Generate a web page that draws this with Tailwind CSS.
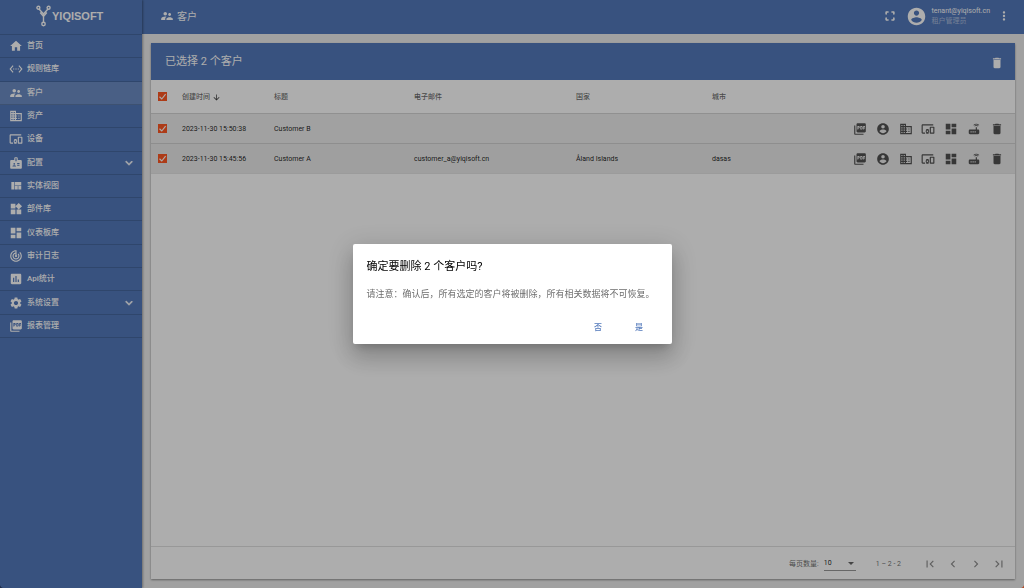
<!DOCTYPE html>
<html lang="zh-CN">
<head>
    <meta charset="UTF-8">
    <meta name="viewport" content="width=device-width, initial-scale=1.0">
    <title>YIQISOFT - 客户</title>
    <script src="https://cdn.jsdelivr.net/npm/@tailwindcss/browser@4"></script>
</head>
<body class="h-screen overflow-hidden bg-[#eeeeee] font-[Roboto,'Noto_Sans_CJK_SC',sans-serif]">

<!-- icon sprite -->
<svg class="hidden">
    <symbol id="home" viewBox="0 0 24 24"><path d="M10 20v-6h4v6h5v-8h3L12 3 2 12h3v8z"/></symbol>
    <symbol id="rules" viewBox="0 0 24 24"><path d="M7.77 6.76L6.23 5.48.82 12l5.41 6.52 1.54-1.28L3.42 12l4.35-5.24zM7 13h2v-2H7v2zm10-2h-2v2h2v-2zm-6 2h2v-2h-2v2zm6.77-7.52l-1.54 1.28L20.58 12l-4.35 5.24 1.54 1.28L23.18 12l-5.41-6.52z"/></symbol>
    <symbol id="customers" viewBox="0 0 24 24"><path d="M16.5 12c1.38 0 2.49-1.12 2.49-2.5S17.88 7 16.5 7C15.12 7 14 8.12 14 9.5s1.12 2.5 2.5 2.5zM9 11c1.66 0 2.99-1.34 2.99-3S10.66 5 9 5C7.34 5 6 6.34 6 8s1.34 3 3 3zm7.5 3c-1.83 0-5.5.92-5.5 2.75V19h11v-2.25c0-1.83-3.67-2.75-5.5-2.75zM9 13c-2.33 0-7 1.17-7 3.5V19h7v-2.25c0-.85.33-2.34 2.37-3.47C10.5 13.1 9.66 13 9 13z"/></symbol>
    <symbol id="assets" viewBox="0 0 24 24"><path d="M12 7V3H2v18h20V7H12zM6 19H4v-2h2v2zm0-4H4v-2h2v2zm0-4H4V9h2v2zm0-4H4V5h2v2zm4 12H8v-2h2v2zm0-4H8v-2h2v2zm0-4H8V9h2v2zm0-4H8V5h2v2zm10 12h-8v-2h2v-2h-2v-2h2v-2h-2V9h8v10zm-2-8h-2v2h2v-2zm0 4h-2v2h2v-2z"/></symbol>
    <symbol id="devices" viewBox="0 0 24 24"><path d="M3 6h18V4H3c-1.1 0-2 .9-2 2v12c0 1.1.9 2 2 2h4v-2H3V6zm10 6H9v1.78c-.61.55-1 1.33-1 2.22s.39 1.67 1 2.22V20h4v-1.78c.61-.55 1-1.34 1-2.22s-.39-1.67-1-2.22V12zm-2 5.5c-.83 0-1.5-.67-1.5-1.5s.67-1.5 1.5-1.5 1.5.67 1.5 1.5-.67 1.5-1.5 1.5zM22 8h-6c-.5 0-1 .5-1 1v10c0 .5.5 1 1 1h6c.5 0 1-.5 1-1V9c0-.5-.5-1-1-1zm-1 10h-4v-8h4v8z"/></symbol>
    <symbol id="profiles" viewBox="0 0 24 24"><path fill-rule="evenodd" d="M20 7h-5V4c0-1.1-.9-2-2-2h-2c-1.1 0-2 .9-2 2v3H4c-1.1 0-2 .9-2 2v11c0 1.1.9 2 2 2h16c1.1 0 2-.9 2-2V9c0-1.1-.9-2-2-2zM9 12c.83 0 1.5.67 1.5 1.5S9.83 15 9 15s-1.5-.67-1.5-1.5S8.17 12 9 12zm3 6H6v-.75c0-1 2-1.5 3-1.5s3 .5 3 1.5V18zm1-9h-2V4h2v5zm5 7.5h-4V15h4v1.5zm0-3h-4V12h4v1.5z"/></symbol>
    <symbol id="views" viewBox="0 0 24 24"><path d="M10 18h5v-6h-5v6zm-6 0h5V5H4v13zm12 0h5v-6h-5v6zM10 5v6h11V5H10z"/></symbol>
    <symbol id="widgets" viewBox="0 0 24 24"><path d="M13 13v8h8v-8h-8zM3 21h8v-8H3v8zM3 3v8h8V3H3zm13.66-1.31L11 7.34 16.66 13l5.66-5.66-5.66-5.65z"/></symbol>
    <symbol id="dashboard" viewBox="0 0 24 24"><path d="M3 13h8V3H3v10zm0 8h8v-6H3v6zm10 0h8V11h-8v10zm0-18v6h8V3h-8z"/></symbol>
    <symbol id="audit" viewBox="0 0 24 24"><path d="M19.07 4.93l-1.41 1.41C19.1 7.79 20 9.79 20 12c0 4.42-3.58 8-8 8s-8-3.58-8-8c0-4.08 3.05-7.44 7-7.93v2.02C8.16 6.57 6 9.03 6 12c0 3.31 2.69 6 6 6s6-2.69 6-6c0-1.66-.67-3.16-1.76-4.24l-1.41 1.41C15.55 9.9 16 10.9 16 12c0 2.21-1.79 4-4 4s-4-1.79-4-4c0-1.86 1.28-3.41 3-3.86v2.14c-.6.35-1 .98-1 1.72 0 1.1.9 2 2 2s2-.9 2-2c0-.74-.4-1.38-1-1.72V2h-1C6.48 2 2 6.48 2 12s4.48 10 10 10 10-4.48 10-10c0-2.76-1.12-5.26-2.93-7.07z"/></symbol>
    <symbol id="usage" viewBox="0 0 24 24"><path d="M19 3H5c-1.1 0-2 .9-2 2v14c0 1.1.9 2 2 2h14c1.1 0 2-.9 2-2V5c0-1.1-.9-2-2-2zM9 17H7v-7h2v7zm4 0h-2V7h2v10zm4 0h-2v-4h2v4z"/></symbol>
    <symbol id="settings" viewBox="0 0 24 24"><path d="M19.14 12.94c.04-.3.06-.61.06-.94 0-.32-.02-.64-.07-.94l2.03-1.58c.18-.14.23-.41.12-.61l-1.92-3.32c-.12-.22-.37-.29-.59-.22l-2.39.96c-.5-.38-1.03-.7-1.62-.94l-.36-2.54c-.04-.24-.24-.41-.48-.41h-3.84c-.24 0-.43.17-.47.41l-.36 2.54c-.59.24-1.13.57-1.62.94l-2.39-.96c-.22-.08-.47 0-.59.22L2.74 8.87c-.12.21-.08.47.12.61l2.03 1.58c-.05.3-.09.63-.09.94s.02.64.07.94l-2.03 1.58c-.18.14-.23.41-.12.61l1.92 3.32c.12.22.37.29.59.22l2.39-.96c.5.38 1.03.7 1.62.94l.36 2.54c.05.24.24.41.48.41h3.84c.24 0 .44-.17.47-.41l.36-2.54c.59-.24 1.13-.56 1.62-.94l2.39.96c.22.08.47 0 .59-.22l1.92-3.32c.12-.22.07-.47-.12-.61l-2.01-1.58zM12 15.6c-1.98 0-3.6-1.62-3.6-3.6s1.62-3.6 3.6-3.6 3.6 1.62 3.6 3.6-1.62 3.6-3.6 3.6z"/></symbol>
    <symbol id="pdf" viewBox="0 0 24 24"><path d="M20 2H8c-1.1 0-2 .9-2 2v12c0 1.1.9 2 2 2h12c1.1 0 2-.9 2-2V4c0-1.1-.9-2-2-2zm-8.5 7.5c0 .83-.67 1.5-1.5 1.5H9v2H7.5V7H10c.83 0 1.5.67 1.5 1.5v1zm5 2c0 .83-.67 1.5-1.5 1.5h-2.5V7H15c.83 0 1.5.67 1.5 1.5v3zm4-3H19v1h1.5V11H19v2h-1.5V7h3v1.5zM9 9.5h1v-1H9v1zM4 6H2v14c0 1.1.9 2 2 2h14v-2H4V6zm10 5.5h1v-3h-1v3z"/></symbol>
    <symbol id="account" viewBox="0 0 24 24"><path d="M12 2C6.48 2 2 6.48 2 12s4.48 10 10 10 10-4.48 10-10S17.52 2 12 2zm0 3c1.66 0 3 1.34 3 3s-1.34 3-3 3-3-1.34-3-3 1.34-3 3-3zm0 14.2c-2.5 0-4.71-1.28-6-3.22.03-1.99 4-3.08 6-3.08 1.99 0 5.97 1.09 6 3.08-1.29 1.94-3.5 3.22-6 3.22z"/></symbol>
    <symbol id="router" viewBox="0 0 24 24"><path d="M20.2 5.9l.8-.8C19.6 3.7 17.8 3 16 3s-3.6.7-5 2.1l.8.8C13 4.8 14.5 4.2 16 4.2s3 .6 4.2 1.7zm-.9.8c-.9-.9-2.1-1.4-3.3-1.4s-2.4.5-3.3 1.4l.8.8c.7-.7 1.6-1 2.5-1 .9 0 1.8.3 2.5 1l.8-.8zM19 13h-2V9h-2v4H5c-1.1 0-2 .9-2 2v4c0 1.1.9 2 2 2h14c1.1 0 2-.9 2-2v-4c0-1.1-.9-2-2-2zM8 18H6v-2h2v2zm3.5 0h-2v-2h2v2zm3.5 0h-2v-2h2v2z"/></symbol>
    <symbol id="delete" viewBox="0 0 24 24"><path d="M6 19c0 1.1.9 2 2 2h8c1.1 0 2-.9 2-2V7H6v12zM19 4h-3.5l-1-1h-5l-1 1H5v2h14V4z"/></symbol>
    <symbol id="fullscreen" viewBox="0 0 24 24"><path d="M5.500 14c-.8 0-1.500.6-1.500 1.300v3.200c0 .8.700 1.500 1.500 1.500h3.200c.7 0 1.300-.6 1.300-1.250S9.400 17.500 8.700 17.500H6.750v-2.200c0-.7-.6-1.300-1.250-1.300zM5.500 10c.65 0 1.250-.6 1.250-1.300V6.500H8.700c.7 0 1.300-.6 1.300-1.250S9.400 4 8.700 4H5.500C4.700 4 4 4.700 4 5.500v3.200c0 .7.700 1.300 1.500 1.300zM17.250 17.500H15.300c-.7 0-1.300.6-1.300 1.250S14.600 20 15.300 20h3.200c.8 0 1.500-.7 1.500-1.500v-3.200c0-.7-.7-1.300-1.400-1.300s-1.350.6-1.350 1.300zM14 5.250c0 .65.600 1.250 1.300 1.250h1.950v2.200c0 .7.650 1.300 1.350 1.300S20 9.400 20 8.700V5.500c0-.8-.7-1.500-1.500-1.500h-3.200c-.7 0-1.300.6-1.300 1.250z"/></symbol>
    <symbol id="more" viewBox="0 0 24 24"><path d="M12 8c1.1 0 2-.9 2-2s-.9-2-2-2-2 .9-2 2 .9 2 2 2zm0 2c-1.1 0-2 .9-2 2s.9 2 2 2 2-.9 2-2-.9-2-2-2zm0 6c-1.1 0-2 .9-2 2s.9 2 2 2 2-.9 2-2-.9-2-2-2z"/></symbol>
    <symbol id="expand" viewBox="0 0 24 24"><path d="M16.59 8.59L12 13.17 7.41 8.59 6 10l6 6 6-6z"/></symbol>
    <symbol id="down" viewBox="0 0 24 24"><path d="M20 12l-1.41-1.41L13 16.17V4h-2v12.17l-5.58-5.59L4 12l8 8 8-8z"/></symbol>
    <symbol id="first" viewBox="0 0 24 24"><path d="M18.41 16.59L13.82 12l4.59-4.59L17 6l-6 6 6 6zM6 6h2v12H6z"/></symbol>
    <symbol id="prev" viewBox="0 0 24 24"><path d="M15.41 7.41L14 6l-6 6 6 6 1.41-1.41L10.83 12z"/></symbol>
    <symbol id="next" viewBox="0 0 24 24"><path d="M10 6L8.59 7.41 13.17 12l-4.58 4.59L10 18l6-6z"/></symbol>
    <symbol id="last" viewBox="0 0 24 24"><path d="M5.59 7.41L10.18 12l-4.59 4.59L7 18l6-6-6-6zM16 6h2v12h-2z"/></symbol>
    <symbol id="check" viewBox="0 0 24 24"><path fill="none" stroke="#fff" stroke-width="3" d="M4 12.7l6 6L20.3 5.6"/></symbol>
</svg>

<div class="flex h-full">
    <!-- sidebar -->
    <aside class="z-10 flex w-[142px] shrink-0 flex-col bg-[#5379bb] text-white shadow-[1px_0_2px_#0005]">
        <div class="flex h-[35px] items-center gap-px border-b border-black/15 pb-[2px] pl-9">
            <svg class="h-[22px] w-[15px]" viewBox="0 0 15 22" fill="none" stroke="currentColor" stroke-width="1.4">
                <path d="M3 4l4.500 5L12 4M7.500 9v8M4.200 7.500l3.300 4 3.300-4"/>
                <circle cx="2.400" cy="2.700" r="1.500"/><circle cx="12.600" cy="2.700" r="1.500"/><circle cx="7.500" cy="19" r="1.700"/>
            </svg>
            <span class="font-['Liberation_Sans',sans-serif] text-[11px] leading-none font-bold">YIQISOFT</span>
        </div>
        <nav class="grid h-[303px] auto-rows-fr text-[8px] font-medium">
            <a href="#" class="flex items-center gap-1 border-b border-black/15 pl-[9px]"><svg class="size-[14px] fill-current"><use href="#home"/></svg>首页</a>
            <a href="#" class="flex items-center gap-1 border-b border-black/15 pl-[9px]"><svg class="size-[14px] fill-current"><use href="#rules"/></svg>规则链库</a>
            <a href="#" class="flex items-center gap-1 border-b border-black/15 bg-white/15 pl-[9px]"><svg class="size-[14px] fill-current"><use href="#customers"/></svg>客户</a>
            <a href="#" class="flex items-center gap-1 border-b border-black/15 pl-[9px]"><svg class="size-[14px] fill-current"><use href="#assets"/></svg>资产</a>
            <a href="#" class="flex items-center gap-1 border-b border-black/15 pl-[9px]"><svg class="size-[14px] fill-current"><use href="#devices"/></svg>设备</a>
            <a href="#" class="flex items-center gap-1 border-b border-black/15 pr-[6px] pl-[9px]"><svg class="size-[14px] fill-current"><use href="#profiles"/></svg>配置<svg class="ml-auto size-[14px] fill-current stroke-current"><use href="#expand"/></svg></a>
            <a href="#" class="flex items-center gap-1 border-b border-black/15 pl-[9px]"><svg class="size-[14px] fill-current"><use href="#views"/></svg>实体视图</a>
            <a href="#" class="flex items-center gap-1 border-b border-black/15 pl-[9px]"><svg class="size-[14px] fill-current"><use href="#widgets"/></svg>部件库</a>
            <a href="#" class="flex items-center gap-1 border-b border-black/15 pl-[9px]"><svg class="size-[14px] fill-current"><use href="#dashboard"/></svg>仪表板库</a>
            <a href="#" class="flex items-center gap-1 border-b border-black/15 pl-[9px]"><svg class="size-[14px] fill-current"><use href="#audit"/></svg>审计日志</a>
            <a href="#" class="flex items-center gap-1 border-b border-black/15 pl-[9px]"><svg class="size-[14px] fill-current"><use href="#usage"/></svg>Api统计</a>
            <a href="#" class="flex items-center gap-1 border-b border-black/15 pr-[6px] pl-[9px]"><svg class="size-[14px] fill-current"><use href="#settings"/></svg>系统设置<svg class="ml-auto size-[14px] fill-current stroke-current"><use href="#expand"/></svg></a>
            <a href="#" class="flex items-center gap-1 border-b border-black/15 pl-[9px]"><svg class="size-[14px] fill-current"><use href="#pdf"/></svg>报表管理</a>
        </nav>
    </aside>

    <div class="flex min-w-0 flex-1 flex-col">
        <!-- top bar -->
        <header class="flex h-[34px] shrink-0 items-center bg-[#5379bb] pr-[13px] pb-[2px] pl-[18px] text-white">
            <svg class="mr-[3px] size-[14px] fill-current"><use href="#customers"/></svg>
            <h1 class="text-[10px]">客户</h1>
            <button class="ml-auto" aria-label="全屏"><svg class="size-[14px] fill-current"><use href="#fullscreen"/></svg></button>
            <svg class="ml-[9px] size-[21px] fill-current"><use href="#account"/></svg>
            <div class="ml-1 text-[7px] leading-[10px]">
                <div>tenant@yiqisoft.cn</div>
                <div class="text-white/50">租户管理员</div>
            </div>
            <button class="ml-[7px]" aria-label="更多"><svg class="size-[14px] fill-current"><use href="#more"/></svg></button>
        </header>

        <main class="flex min-h-0 flex-1 flex-col p-[9px]">
            <section class="flex flex-1 flex-col bg-white shadow-[0_1px_2px_#0006]">
                <div class="flex h-[37px] items-center justify-between bg-[#5379bb] pt-[2px] pr-[11px] pl-[14px] text-white">
                    <h2 class="text-[11px]">已选择 2 个客户</h2>
                    <button aria-label="删除"><svg class="size-[14px] fill-current"><use href="#delete"/></svg></button>
                </div>

                <table class="w-full table-fixed text-left text-[7px] text-black/87 [&_:is(td,th):not(:first-child)]:pt-[2px]">
                    <colgroup>
                        <col class="w-[31px]"><col class="w-[92px]"><col class="w-[140px]"><col class="w-[162px]"><col class="w-[136px]"><col><col class="w-[162px]">
                    </colgroup>
                    <thead>
                        <tr class="h-[33px] border-b border-black/10 text-black/60">
                            <th class="pl-[7px]"><label class="grid size-[9px] place-items-center *:col-start-1 *:row-start-1"><input type="checkbox" checked aria-label="全选" class="size-[9px] appearance-none bg-[#ff5722]"><svg class="size-[9px]"><use href="#check"/></svg></label></th>
                            <th class="font-medium"><div class="flex items-center gap-[2px]">创建时间<svg class="size-[9px] fill-black/75"><use href="#down"/></svg></div></th>
                            <th class="font-medium">标题</th>
                            <th class="font-medium">电子邮件</th>
                            <th class="font-medium">国家</th>
                            <th class="font-medium">城市</th>
                            <th></th>
                        </tr>
                    </thead>
                    <tbody>
                        <tr class="h-[30px] border-b border-black/10 bg-[#eeeeee]">
                            <td class="pl-[7px]"><label class="grid size-[9px] place-items-center *:col-start-1 *:row-start-1"><input type="checkbox" checked aria-label="Customer B" class="size-[9px] appearance-none bg-[#ff5722]"><svg class="size-[9px]"><use href="#check"/></svg></label></td>
                            <td>2023-11-30 15:50:38</td>
                            <td>Customer B</td>
                            <td></td>
                            <td></td>
                            <td></td>
                            <td class="pr-[11px]">
                                <div class="flex justify-between *:size-[14px]">
                                    <button aria-label="报表"><svg class="size-[14px] fill-black/65"><use href="#pdf"/></svg></button>
                                    <button aria-label="用户"><svg class="size-[14px] fill-black/65"><use href="#account"/></svg></button>
                                    <button aria-label="资产"><svg class="size-[14px] fill-black/65"><use href="#assets"/></svg></button>
                                    <button aria-label="设备"><svg class="size-[14px] fill-black/65"><use href="#devices"/></svg></button>
                                    <button aria-label="仪表板"><svg class="size-[14px] fill-black/65"><use href="#dashboard"/></svg></button>
                                    <button aria-label="边缘"><svg class="size-[14px] fill-black/65"><use href="#router"/></svg></button>
                                    <button aria-label="删除"><svg class="size-[14px] fill-black/65"><use href="#delete"/></svg></button>
                                </div>
                            </td>
                        </tr>
                        <tr class="h-[30px] border-b border-black/10 bg-[#eaeaea]">
                            <td class="pl-[7px]"><label class="grid size-[9px] place-items-center *:col-start-1 *:row-start-1"><input type="checkbox" checked aria-label="Customer A" class="size-[9px] appearance-none bg-[#ff5722]"><svg class="size-[9px]"><use href="#check"/></svg></label></td>
                            <td>2023-11-30 15:45:56</td>
                            <td>Customer A</td>
                            <td>customer_a@yiqisoft.cn</td>
                            <td>Åland Islands</td>
                            <td>dasas</td>
                            <td class="pr-[11px]">
                                <div class="flex justify-between *:size-[14px]">
                                    <button aria-label="报表"><svg class="size-[14px] fill-black/65"><use href="#pdf"/></svg></button>
                                    <button aria-label="用户"><svg class="size-[14px] fill-black/65"><use href="#account"/></svg></button>
                                    <button aria-label="资产"><svg class="size-[14px] fill-black/65"><use href="#assets"/></svg></button>
                                    <button aria-label="设备"><svg class="size-[14px] fill-black/65"><use href="#devices"/></svg></button>
                                    <button aria-label="仪表板"><svg class="size-[14px] fill-black/65"><use href="#dashboard"/></svg></button>
                                    <button aria-label="边缘"><svg class="size-[14px] fill-black/65"><use href="#router"/></svg></button>
                                    <button aria-label="删除"><svg class="size-[14px] fill-black/65"><use href="#delete"/></svg></button>
                                </div>
                            </td>
                        </tr>
                    </tbody>
                </table>

                <!-- paginator -->
                <footer class="mt-auto flex h-[33px] items-center justify-end border-t border-black/12 pt-[2px] pr-[9px] text-[7px] text-black/60">
                    <label for="pageSize">每页数量:</label>
                    <div class="relative ml-[5px] border-b border-black/40">
                        <select id="pageSize" class="block h-3 w-8 appearance-none text-black/87">
                            <option>10</option>
                        </select>
                        <svg class="pointer-events-none absolute top-1 right-[2px] h-[3px] w-[6px] fill-black/60" viewBox="0 0 6 3"><path d="M0 0h6L3 3z"/></svg>
                    </div>
                    <span class="mr-[22px] ml-5">1 – 2 - 2</span>
                    <div class="flex gap-[9px] *:size-[14px]">
                        <button aria-label="第一页"><svg class="size-[14px] fill-black/45"><use href="#first"/></svg></button>
                        <button aria-label="上一页"><svg class="size-[14px] fill-black/45"><use href="#prev"/></svg></button>
                        <button aria-label="下一页"><svg class="size-[14px] fill-black/45"><use href="#next"/></svg></button>
                        <button aria-label="最后一页"><svg class="size-[14px] fill-black/45"><use href="#last"/></svg></button>
                    </div>
                </footer>
            </section>
        </main>
    </div>
</div>

<!-- confirm dialog -->
<div class="fixed inset-0 z-20 flex items-center justify-center bg-black/32">
    <div role="dialog" aria-modal="true" aria-labelledby="dialogTitle" class="w-[319px] rounded-[2px] bg-white p-[14px] pb-[6px] shadow-[0_6px_9px_-4px_#00000033,0_14px_22px_2px_#00000024,0_5px_27px_5px_#0000001f]">
        <h2 id="dialogTitle" class="text-[11px] leading-[18px] text-black">确定要删除 2 个客户吗?</h2>
        <p class="mt-[10px] text-[9px] leading-[16px] whitespace-nowrap text-black/60">请注意：确认后，所有选定的客户将被删除，所有相关数据将不可恢复。</p>
        <div class="mt-[15px] flex justify-end gap-1 text-[8px] font-medium text-[#5379bb]">
            <button class="h-[21px] w-[37px]">否</button>
            <button class="h-[21px] w-[37px]">是</button>
        </div>
    </div>
</div>

<!-- rounded window corners -->
<div class="pointer-events-none fixed bottom-0 left-0 z-30 size-[5px] bg-[radial-gradient(circle_at_100%_0,transparent_5px,#1c2b48_6px)]"></div>
<div class="pointer-events-none fixed right-0 bottom-0 z-30 size-[5px] bg-[radial-gradient(circle_at_0_0,transparent_5px,#b5451f_6px)]"></div>

</body>
</html>
